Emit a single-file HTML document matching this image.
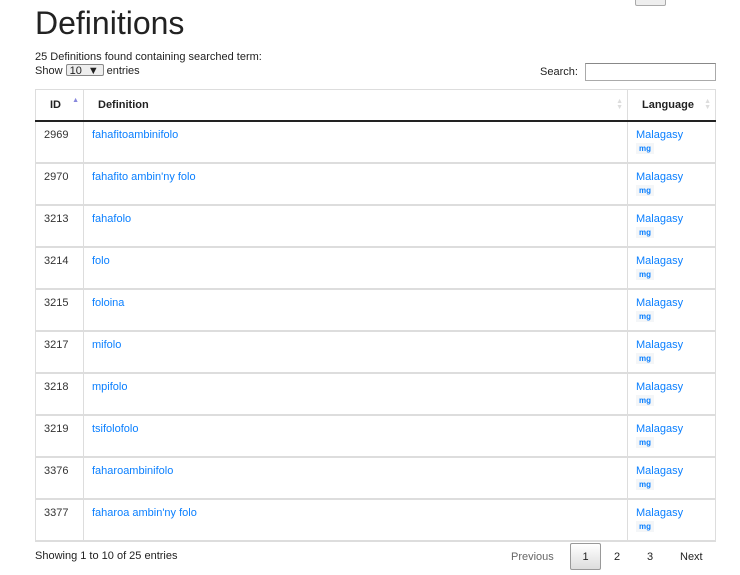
<!DOCTYPE html>
<html><head><style>
body{margin:0;background:#fff;font-family:"Liberation Sans",sans-serif;color:#333;position:relative;width:740px;height:575px;overflow:hidden}
.btn{position:absolute;left:635px;top:-6px;width:29px;height:10px;border:1px solid #aaa;border-radius:2px;background:#eee}
h1{position:absolute;left:35px;top:5px;margin:0;font-size:32px;font-weight:normal;color:#222}
.info{position:absolute;left:35px;top:50px;font-size:11px;line-height:14px;color:#222}
.sel{display:inline-block;width:38px;height:12px;border:1px solid #888;border-radius:2px;background:#eee;vertical-align:middle;font-size:11px;line-height:12px;box-sizing:border-box;padding-left:3px;position:relative;top:-1px}
.search{position:absolute;left:540px;top:66px;font-size:11px;color:#222}
.search span{display:inline-block;position:absolute;left:45px;top:-3px;width:131px;height:18px;border:1px solid #aaa;border-top-color:#888;box-sizing:border-box}
table{position:absolute;left:35px;top:89px;border-collapse:collapse;font-size:11px;width:681px}
th,td{border:1px solid #ddd;text-align:left;vertical-align:top}
th{height:28px;border-bottom:2px solid #222;font-weight:bold;color:#222;vertical-align:middle;position:relative}
td{padding:7px 8px 0 8px;box-sizing:border-box;border-width:2px 1px}
tr td{height:42px}
a{color:#0a7fff;text-decoration:none}
.mg{display:inline-block;font-size:8px;font-weight:bold;background:#f4f6f8;padding:1px 3px;margin-top:2px}
.ar{position:absolute;right:4px;top:9px;font-size:7px;line-height:6px;color:#ddd}
.foot{position:absolute;left:35px;top:550px;font-size:11px;color:#222}
.pg{position:absolute;top:544px;height:26px;line-height:26px;font-size:11px;color:#222}
</style></head><body>
<div class="btn"></div>
<h1>Definitions</h1>
<div class="info">25 Definitions found containing searched term:<br>Show <span class="sel">10 &nbsp;▼</span> entries</div>
<div class="search">Search:<span></span></div>
<table>
<tr><th style="width:48px;padding-left:14px;box-sizing:border-box">ID<span class="ar" style="color:#8888dd;top:8px">▲</span></th><th style="padding-left:14px">Definition<span class="ar">▲<br>▼</span></th><th style="width:88px;padding-left:14px;box-sizing:border-box">Language<span class="ar">▲<br>▼</span></th></tr>
<tr><td>2969</td><td><a>fahafitoambinifolo</a></td><td><a>Malagasy</a><br><a class="mg">mg</a></td></tr>
<tr><td>2970</td><td><a>fahafito ambin'ny folo</a></td><td><a>Malagasy</a><br><a class="mg">mg</a></td></tr>
<tr><td>3213</td><td><a>fahafolo</a></td><td><a>Malagasy</a><br><a class="mg">mg</a></td></tr>
<tr><td>3214</td><td><a>folo</a></td><td><a>Malagasy</a><br><a class="mg">mg</a></td></tr>
<tr><td>3215</td><td><a>foloina</a></td><td><a>Malagasy</a><br><a class="mg">mg</a></td></tr>
<tr><td>3217</td><td><a>mifolo</a></td><td><a>Malagasy</a><br><a class="mg">mg</a></td></tr>
<tr><td>3218</td><td><a>mpifolo</a></td><td><a>Malagasy</a><br><a class="mg">mg</a></td></tr>
<tr><td>3219</td><td><a>tsifolofolo</a></td><td><a>Malagasy</a><br><a class="mg">mg</a></td></tr>
<tr><td>3376</td><td><a>faharoambinifolo</a></td><td><a>Malagasy</a><br><a class="mg">mg</a></td></tr>
<tr><td>3377</td><td><a>faharoa ambin'ny folo</a></td><td><a>Malagasy</a><br><a class="mg">mg</a></td></tr>
</table>
<div class="foot">Showing 1 to 10 of 25 entries</div>
<div class="pg" style="left:511px;color:#666">Previous</div>
<div class="pg" style="left:570px;width:31px;top:543px;border:1px solid #999;border-radius:2px;background:linear-gradient(#fff,#ddd);text-align:center;box-sizing:border-box;line-height:26px;height:27px">1</div>
<div class="pg" style="left:614px">2</div>
<div class="pg" style="left:647px">3</div>
<div class="pg" style="left:680px">Next</div>
</body></html>
